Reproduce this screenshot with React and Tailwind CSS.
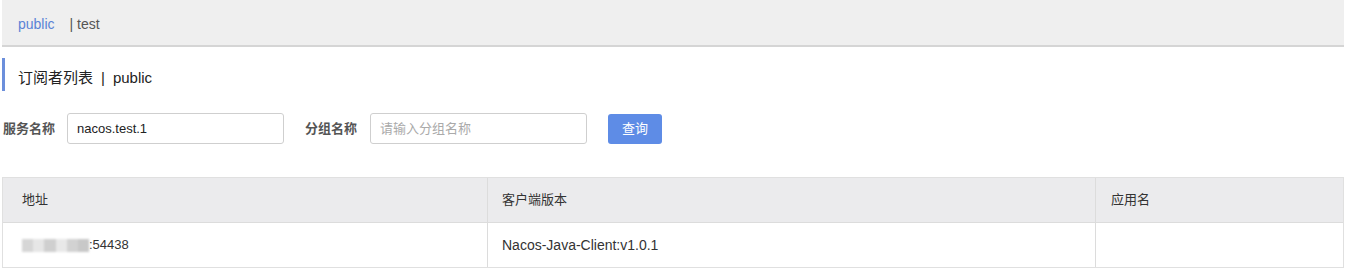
export default function App() {
  const font = { fontFamily: '"Liberation Sans", "Noto Sans CJK SC", sans-serif' }
  return (
    <div className="w-[1348px] h-[273px] bg-white text-[#333] text-[13px]" style={font}>
      <div className="ml-[2px] mr-[4px] h-[47px] bg-[#efefef] border-b-2 border-[#d5d5d5] flex items-center pl-[16px] pt-[4px] text-[14px]">
        <span className="text-[#5a83d6]">public</span>
        <span className="ml-[15px] text-[#555]">| test</span>
      </div>

      <div className="ml-[2px] mt-[11px] h-[33px] border-l-[3px] border-[#6c8fdb] flex items-center pl-[13px] pt-[8px] text-[15px] text-[#222]">
        订阅者列表<span className="mx-[8px]">|</span>public
      </div>

      <div className="mt-[22px] flex items-center h-[31px]">
        <label className="ml-[3px] w-[64px] font-bold text-[#555]">服务名称</label>
        <input
          defaultValue="nacos.test.1"
          className="w-[217px] h-[31px] px-[9px] border border-[#cfcfcf] rounded-[3px] text-[13px] text-[#222] outline-none"
        />
        <label className="ml-[21px] w-[65px] font-bold text-[#555]">分组名称</label>
        <input
          placeholder="请输入分组名称"
          className="w-[217px] h-[31px] px-[9px] border border-[#cfcfcf] rounded-[3px] text-[13px] outline-none placeholder:text-[#aaa]"
        />
        <button className="ml-[21px] w-[54px] h-[30px] rounded-[3px] bg-[#5e8ce6] text-white text-[13px]">查询</button>
      </div>

      <div className="ml-[2px] mr-[4px] mt-[33px] border border-[#e0e0e0] text-[13px] text-[#333]">
        <div className="grid grid-cols-[485px_608px_1fr] h-[45px] bg-[#ebebed] border-b border-[#dcdcdc]">
          <div className="flex items-center pl-[19px] border-r border-[#dcdcdc]">地址</div>
          <div className="flex items-center pl-[14px] border-r border-[#dcdcdc]">客户端版本</div>
          <div className="flex items-center pl-[15px]">应用名</div>
        </div>
        <div className="grid grid-cols-[485px_608px_1fr] h-[44px]">
          <div className="flex items-center pl-[19px] border-r border-[#dcdcdc]">
            <span className="flex h-[13px] w-[67px] blur-[1px]">
              <span className="flex-1 bg-[#d6d6d6]" />
              <span className="flex-1 bg-[#e6e6e6]" />
              <span className="flex-1 bg-[#cfcfcf]" />
              <span className="flex-1 bg-[#e8e8e8]" />
              <span className="flex-1 bg-[#d2d2d2]" />
              <span className="flex-1 bg-[#c8c8c8]" />
            </span>
            <span>:54438</span>
          </div>
          <div className="flex items-center pl-[14px] border-r border-[#dcdcdc] text-[14px]">Nacos-Java-Client:v1.0.1</div>
          <div />
        </div>
      </div>
    </div>
  )
}
